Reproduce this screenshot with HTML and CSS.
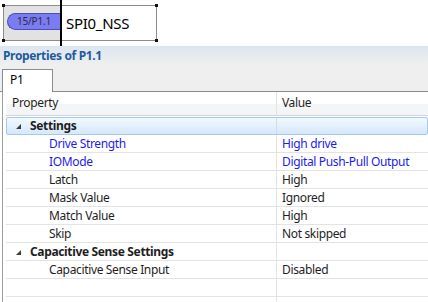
FILE: index.html
```html
<!DOCTYPE html>
<html>
<head>
<meta charset="utf-8">
<link rel="stylesheet" href="styles.css">
</head>
<body>
<div class="canvas">
  <div class="frame">
    <div class="pin-cell"><div class="pill">15/P1.1</div></div>
    <div class="divider"></div>
    <div class="name-cell">SPI0_NSS</div>
    <span class="handle tl"></span>
    <span class="handle tr"></span>
    <span class="handle bl"></span>
    <span class="handle br"></span>
  </div>
</div>
<div class="panel">
  <div class="panel-head">
    <div class="title">Properties of P1.1</div>
    <div class="tabstrip"><div class="tab">P1</div></div>
  </div>
  <div class="content">
    <div class="row header">
      <div class="cell name">Property</div>
      <div class="cell value">Value</div>
    </div>
    <div class="row group selected">
      <div class="cell name"><span class="expander"></span>Settings</div>
      <div class="cell value"></div>
    </div>
    <div class="row blue">
      <div class="cell name child">Drive Strength</div>
      <div class="cell value">High drive</div>
    </div>
    <div class="row blue">
      <div class="cell name child">IOMode</div>
      <div class="cell value">Digital Push-Pull Output</div>
    </div>
    <div class="row">
      <div class="cell name child">Latch</div>
      <div class="cell value">High</div>
    </div>
    <div class="row">
      <div class="cell name child">Mask Value</div>
      <div class="cell value">Ignored</div>
    </div>
    <div class="row">
      <div class="cell name child">Match Value</div>
      <div class="cell value">High</div>
    </div>
    <div class="row">
      <div class="cell name child">Skip</div>
      <div class="cell value">Not skipped</div>
    </div>
    <div class="row group">
      <div class="cell name"><span class="expander"></span>Capacitive Sense Settings</div>
      <div class="cell value"></div>
    </div>
    <div class="row">
      <div class="cell name child">Capacitive Sense Input</div>
      <div class="cell value">Disabled</div>
    </div>
    <div class="row">
      <div class="cell name"></div>
      <div class="cell value"></div>
    </div>
    <div class="row">
      <div class="cell name"></div>
      <div class="cell value"></div>
    </div>
  </div>
</div>
</body>
</html>
```

FILE: styles.css
```css
* { box-sizing: border-box; }
html, body { margin: 0; padding: 0; background: #fff; overflow: hidden; }
body {
  width: 428px;
  height: 302px;
  font-family: "Noto Sans", "Open Sans", sans-serif;
  font-size: 12px;
  letter-spacing: -0.35px;
  color: #1e1e1e;
}

.canvas {
  height: 46px;
  padding: 5px 0 0 3px;
  background: #fff;
}
.frame {
  position: relative;
  display: flex;
  width: 154px;
  height: 36px;
  border: 1px solid #8c8c8c;
}
.pin-cell {
  width: 56px;
  background: #e2e2e2;
  padding: 7px 0 0 3px;
}
.pill {
  width: 53px;
  height: 17px;
  background: #7b7bf2;
  border: 1px solid #4d4db8;
  border-right: none;
  border-radius: 9px 0 0 9px;
  font-size: 10px;
  letter-spacing: -0.2px;
  line-height: 15px;
  padding-left: 9px;
  color: #2a2a44;
}
.divider {
  width: 2px;
  background: #000;
  margin: -6px 0 -6px;
}
.name-cell {
  flex: 1;
  background: #fff;
  padding-left: 4px;
  font-size: 15px;
  letter-spacing: -0.3px;
  line-height: 34px;
  color: #000;
}
.handle {
  position: absolute;
  width: 3px;
  height: 3px;
  background: #111;
}
.handle.tl { left: -2px; top: -2px; }
.handle.tr { right: -2px; top: -2px; }
.handle.bl { left: -2px; bottom: -2px; }
.handle.br { right: -2px; bottom: -2px; }

.panel-head {
  background: linear-gradient(#dce5ef 0, #e9ecef 12px, #efefef 20px, #efefef 100%);
}
.title {
  height: 19px;
  padding-left: 3px;
  font-weight: bold;
  color: #1d5b9f;
  line-height: 20px;
}
.tabstrip {
  height: 27px;
  padding: 4px 0 0 2px;
  border-bottom: 1px solid #898c95;
  display: flex;
  align-items: flex-end;
}
.tab {
  width: 51px;
  height: 23px;
  margin-bottom: -1px;
  background: #fff;
  border: 1px solid #898c95;
  border-bottom: none;
  padding-left: 7px;
  line-height: 20px;
  color: #000;
}

.content {
  margin-left: 2px;
  border-left: 1px solid #9c9c9c;
  padding-left: 3px;
  height: 210px;
}
.row {
  display: grid;
  grid-template-columns: 271px 1fr;
  height: 18px;
}
.cell {
  border-bottom: 1px solid #e3e3e3;
  line-height: 17px;
  white-space: nowrap;
  overflow: hidden;
}
.cell.name {
  border-right: 1px solid #e3e3e3;
  padding-left: 6px;
}
.cell.value { padding-left: 5px; }
.cell.child { padding-left: 43px; }

.row.header {
  height: 24px;
  margin-bottom: 1px;
  background: linear-gradient(#ffffff 0, #ffffff 50%, #f4f5f7 50%, #f4f5f7 100%);
}
.row.header .cell {
  line-height: 22px;
  border-bottom-color: #d5d5d5;
}
.row.group .cell.name {
  font-weight: bold;
  padding-left: 10px;
  display: flex;
  align-items: center;
}
.expander {
  width: 0;
  height: 0;
  border-left: 5px solid transparent;
  border-bottom: 5px solid #3c3c3c;
  margin-right: 9px;
  margin-top: 1px;
}
.row.selected {
  background: linear-gradient(#f2f8fe, #d6e8fb);
  border: 1px solid #a4c8ee;
  border-radius: 2px;
}
.row.selected .cell { border-bottom: none; line-height: 16px; }
.row.selected .cell.name { border-right-color: #c9def3; margin-left: -1px; width: 271px; }
.row.blue .cell { color: #1c1cf0; }
```
